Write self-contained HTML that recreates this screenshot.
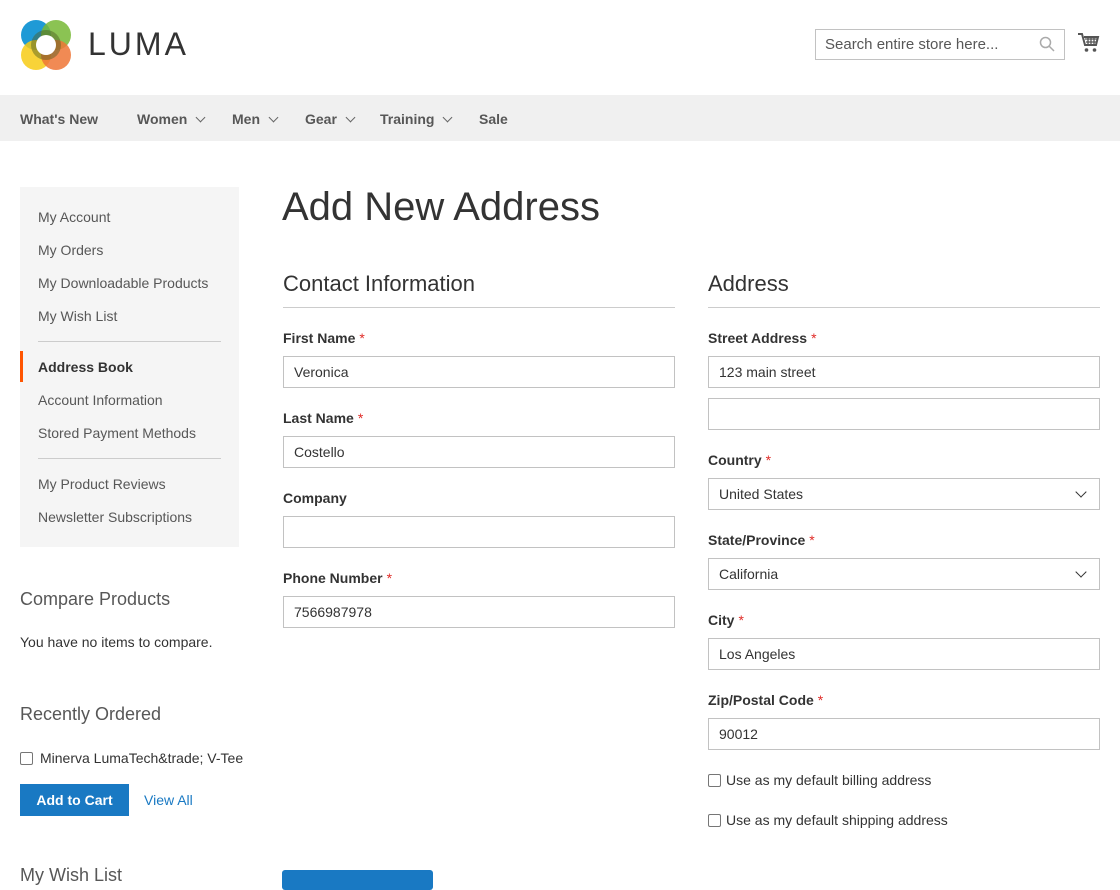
<!DOCTYPE html>
<html><head><meta charset="utf-8"><style>
*{box-sizing:border-box;margin:0;padding:0}
body{width:1120px;height:880px;overflow:hidden;background:#fff;font-family:"Liberation Sans",sans-serif;color:#333;font-size:14px;position:relative}
.a{position:absolute;white-space:nowrap}
.nav{position:absolute;left:0;top:95px;width:1120px;height:46px;background:#f0f0f0}
.nav span{position:absolute;top:16px;font-weight:bold;font-size:14px;color:#575757}
.chev{display:inline-block;width:7px;height:7px;border-right:1.5px solid #666;border-bottom:1.5px solid #666;transform:rotate(45deg);margin-left:10px;position:relative;top:-3px}
.side{position:absolute;left:20px;top:187px;width:219px;height:360px;background:#f5f5f5}
.side div{position:absolute;left:18px;font-size:14px;color:#575757}
.hr{position:absolute;left:18px;width:183px;height:1px;background:#ccc}
.lbl{position:absolute;font-weight:bold;font-size:14px;color:#333}
.lbl b{color:#e02b27;font-weight:normal;margin-left:4px}
.in{position:absolute;height:32px;border:1px solid #c2c2c2;padding:0 10px;line-height:31px;font-size:14px;color:#333;background:#fff}
.sel:after{content:"";position:absolute;right:14px;top:9px;width:7px;height:7px;border-right:1.5px solid #333;border-bottom:1.5px solid #333;transform:rotate(45deg)}
.h2{position:absolute;font-size:22px;font-weight:300;color:#333}
.line{position:absolute;height:1px;background:#ccc}
.cb{position:absolute;width:13px;height:13px;border:1px solid #767676;border-radius:2px;background:#fff}
</style></head><body>
<svg class="a" style="left:20px;top:19px" width="52" height="52" viewBox="0 0 52 52">
<circle cx="16" cy="16" r="15" fill="#1f9ad6"/>
<circle cx="36" cy="16" r="15" fill="#77b935" opacity=".85"/>
<circle cx="16" cy="36" r="15" fill="#f7cb15" opacity=".85"/>
<circle cx="36" cy="36" r="15" fill="#ef7536" opacity=".85"/>
<circle cx="26" cy="26" r="15" fill="#4e5a22" opacity=".45"/>
<circle cx="26" cy="26" r="10" fill="#fff"/>
</svg>
<div class="a" style="left:88px;top:26px;font-size:32px;letter-spacing:3px;color:#333">LUMA</div>
<div class="a" style="left:815px;top:29px;width:250px;height:31px;border:1px solid #c2c2c2;padding-left:9px;line-height:29px;font-size:15px;color:#575757">Search entire store here...</div>
<svg class="a" style="left:1039px;top:36px" width="16" height="16" viewBox="0 0 16 16"><circle cx="6.5" cy="6.5" r="5" fill="none" stroke="#aaa" stroke-width="1.5"/><path d="M10 10l5 5" stroke="#aaa" stroke-width="1.5"/></svg>
<svg class="a" style="left:1078px;top:32px" width="22" height="22" viewBox="0 0 22 22"><path d="M0 2h4l3 11h11l2-8H6" fill="none" stroke="#555" stroke-width="2"/><path d="M7 7h12M8 10h10M10 5v8M13 5v8M16 5v8" stroke="#555" stroke-width="1.3"/><circle cx="8.5" cy="18" r="1.8" fill="#555"/><circle cx="16.5" cy="18" r="1.8" fill="#555"/></svg>
<div class="nav">
<span style="left:20px">What's New</span>
<span style="left:137px">Women<i class="chev"></i></span>
<span style="left:232px">Men<i class="chev"></i></span>
<span style="left:305px">Gear<i class="chev"></i></span>
<span style="left:380px">Training<i class="chev"></i></span>
<span style="left:479px">Sale</span>
</div>
<div class="side">
<div style="top:22px">My Account</div>
<div style="top:55px">My Orders</div>
<div style="top:88px">My Downloadable Products</div>
<div style="top:121px">My Wish List</div>
<div class="hr" style="top:154px"></div>
<div style="top:172px;color:#333;font-weight:bold">Address Book</div>
<span style="position:absolute;left:0;top:164px;width:3px;height:31px;background:#ff5501"></span>
<div style="top:205px">Account Information</div>
<div style="top:238px">Stored Payment Methods</div>
<div class="hr" style="top:271px"></div>
<div style="top:289px">My Product Reviews</div>
<div style="top:322px">Newsletter Subscriptions</div>
</div>
<div class="a" style="left:20px;top:589px;font-size:18px;font-weight:300;color:#575757">Compare Products</div>
<div class="a" style="left:20px;top:634px;font-size:14px">You have no items to compare.</div>
<div class="a" style="left:20px;top:704px;font-size:18px;font-weight:300;color:#575757">Recently Ordered</div>
<div class="cb" style="left:20px;top:752px"></div>
<div class="a" style="left:40px;top:750px;font-size:14px">Minerva LumaTech&amp;trade; V-Tee</div>
<div class="a" style="left:20px;top:784px;width:109px;height:32px;background:#1979c3;color:#fff;font-weight:bold;font-size:14px;line-height:32px;text-align:center">Add to Cart</div>
<div class="a" style="left:144px;top:792px;color:#1979c3">View All</div>
<div class="a" style="left:20px;top:865px;font-size:18px;font-weight:300;color:#575757">My Wish List</div>
<div class="a" style="left:282px;top:870px;width:151px;height:20px;background:#1979c3;border-radius:3px"></div>

<div class="a" style="left:282px;top:185px;font-size:40px;font-weight:300;color:#333">Add New Address</div>
<div class="h2" style="left:283px;top:271px">Contact Information</div>
<div class="line" style="left:283px;top:307px;width:392px"></div>
<div class="h2" style="left:708px;top:271px">Address</div>
<div class="line" style="left:708px;top:307px;width:392px"></div>

<div class="lbl" style="left:283px;top:330px">First Name<b>*</b></div>
<div class="in" style="left:283px;top:356px;width:392px">Veronica</div>
<div class="lbl" style="left:283px;top:410px">Last Name<b>*</b></div>
<div class="in" style="left:283px;top:436px;width:392px">Costello</div>
<div class="lbl" style="left:283px;top:490px">Company</div>
<div class="in" style="left:283px;top:516px;width:392px"></div>
<div class="lbl" style="left:283px;top:570px">Phone Number<b>*</b></div>
<div class="in" style="left:283px;top:596px;width:392px">7566987978</div>

<div class="lbl" style="left:708px;top:330px">Street Address<b>*</b></div>
<div class="in" style="left:708px;top:356px;width:392px">123 main street</div>
<div class="in" style="left:708px;top:398px;width:392px"></div>
<div class="lbl" style="left:708px;top:452px">Country<b>*</b></div>
<div class="in sel" style="left:708px;top:478px;width:392px">United States</div>
<div class="lbl" style="left:708px;top:532px">State/Province<b>*</b></div>
<div class="in sel" style="left:708px;top:558px;width:392px">California</div>
<div class="lbl" style="left:708px;top:612px">City<b>*</b></div>
<div class="in" style="left:708px;top:638px;width:392px">Los Angeles</div>
<div class="lbl" style="left:708px;top:692px">Zip/Postal Code<b>*</b></div>
<div class="in" style="left:708px;top:718px;width:392px">90012</div>
<div class="cb" style="left:708px;top:774px"></div>
<div class="a" style="left:726px;top:772px">Use as my default billing address</div>
<div class="cb" style="left:708px;top:814px"></div>
<div class="a" style="left:726px;top:812px">Use as my default shipping address</div>
</body></html>
